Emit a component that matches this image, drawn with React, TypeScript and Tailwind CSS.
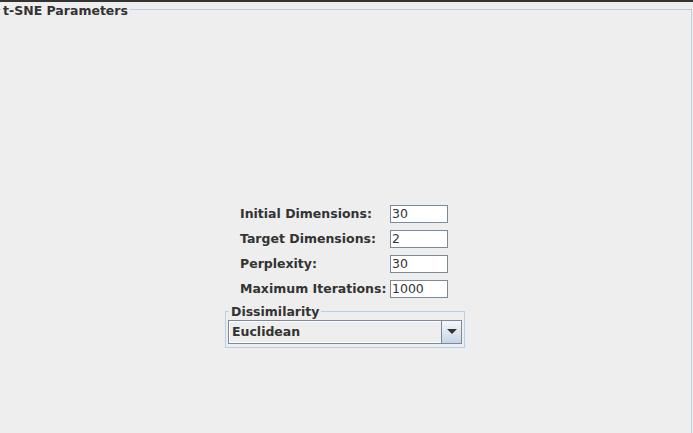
import React from "react";

const font = { fontFamily: '"DejaVu Sans", sans-serif' };

function Field({ value }: { value: string }) {
  return (
    <div className="w-[58px] h-[18px] border border-[#7a8a99] bg-white flex items-center pl-[1px] text-[12.5px] text-[#333333] leading-none">
      {value}
    </div>
  );
}

export default function App() {
  const rows: [string, string][] = [
    ["Initial Dimensions:", "30"],
    ["Target Dimensions:", "2"],
    ["Perplexity:", "30"],
    ["Maximum Iterations:", "1000"],
  ];
  return (
    <div className="w-[693px] h-[433px] bg-[#eeeeee] flex flex-col overflow-hidden" style={font}>
      <div className="h-[2px] bg-[#33332f] shrink-0" />
      <div className="relative shrink-0 ml-[-4px] mr-[1px] mt-[7px] border border-[#b8cfe5] h-[500px] flex flex-col items-center pt-[195px]">
        <span className="absolute left-[4px] top-[-7px] bg-[#eeeeee] px-[2px] text-[12.5px] font-bold text-[#333333] leading-[15px]">
          t-SNE Parameters
        </span>
        <div className="grid grid-cols-[150px_58px] gap-y-[7px] items-center">
          {rows.map(([l, v]) => (
            <React.Fragment key={l}>
              <span className="text-[12.5px] font-bold text-[#333333] leading-none whitespace-nowrap">{l}</span>
              <Field value={v} />
            </React.Fragment>
          ))}
        </div>
        <div className="relative mt-[13px] ml-[2px] w-[240px] border border-[#b8cfe5] px-[2px] pt-[8px] pb-[3px]">
          <span className="absolute left-[3px] top-[-8px] bg-[#eeeeee] px-[2px] text-[12.5px] font-bold text-[#333333] leading-[15px]">
            Dissimilarity
          </span>
          <div className="h-[24px] border border-[#7a8a99] flex bg-[#eeeeee]">
            <div className="flex-1 border border-white border-r-0 flex items-center pl-[2px] text-[12.5px] font-bold text-[#333333]">
              Euclidean
            </div>
            <div className="w-[20px] border-l border-[#7a8a99] bg-gradient-to-b from-[#f4f7fa] to-[#c6d6e6] flex items-center justify-center">
              <svg width="10" height="6" viewBox="0 0 10 6">
                <path d="M0 0 L10 0 L5 5 Z" fill="#333333" />
              </svg>
            </div>
          </div>
        </div>
      </div>
    </div>
  );
}
